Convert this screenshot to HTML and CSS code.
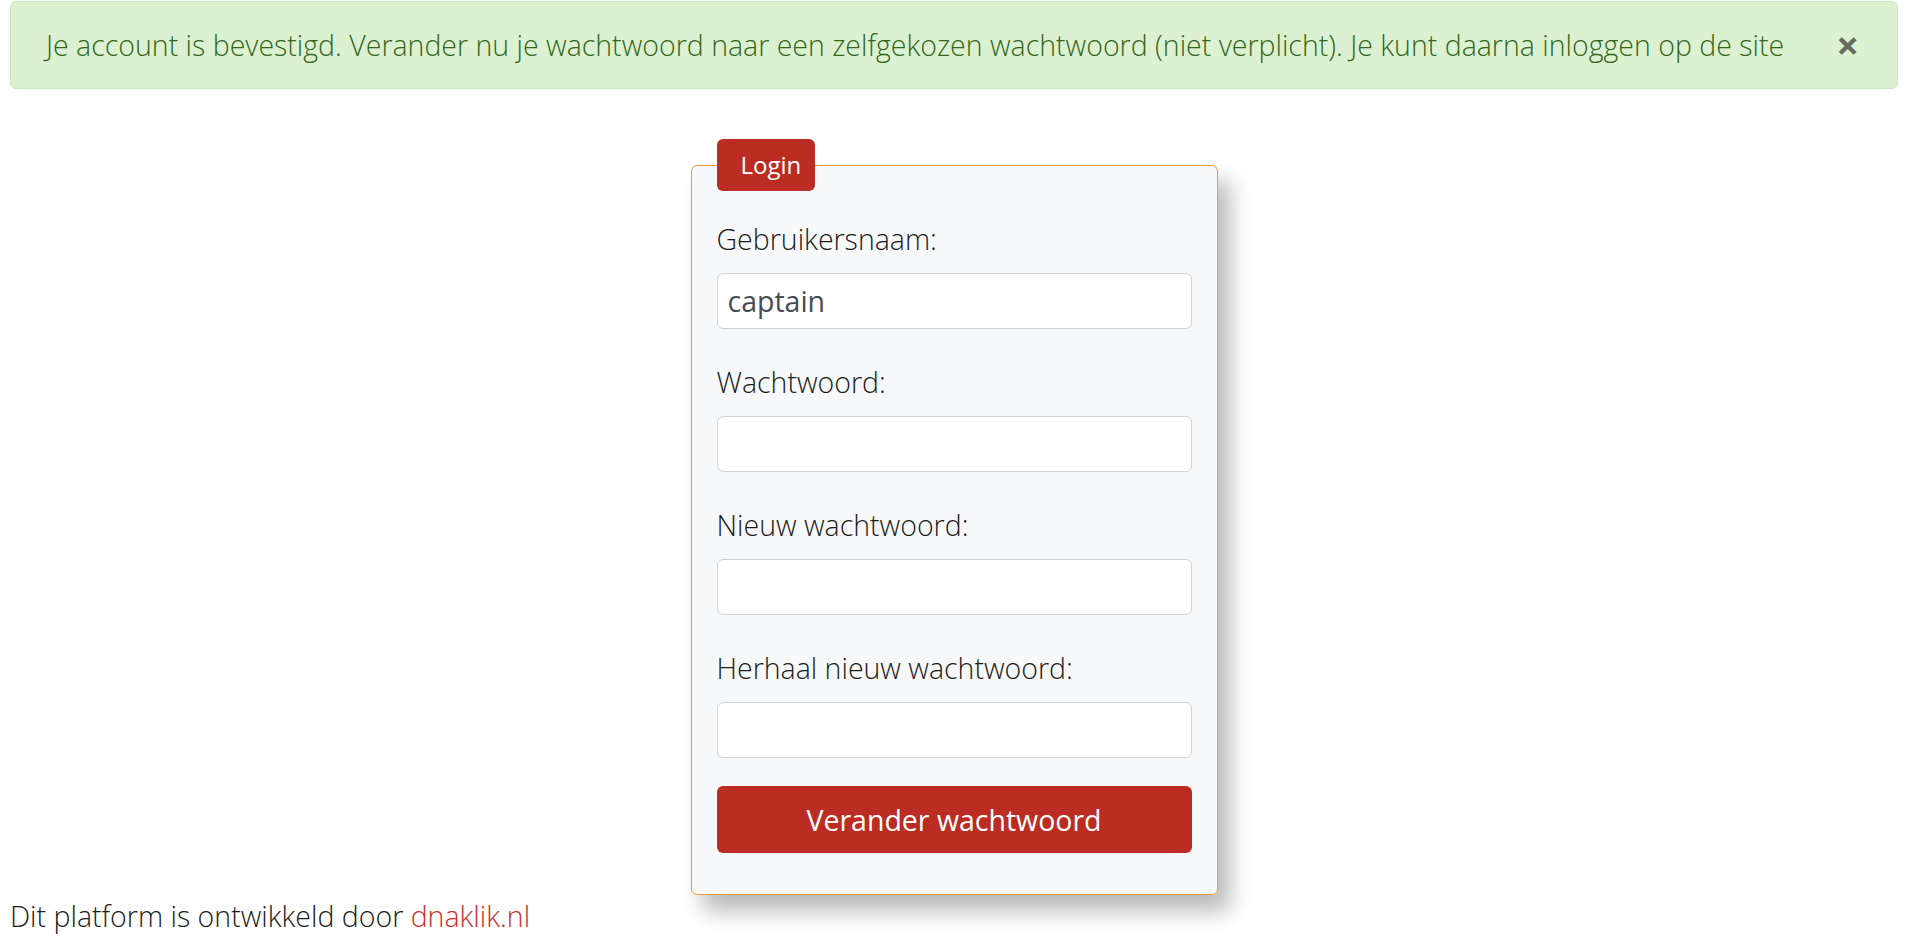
FILE: index.html
```html
<!DOCTYPE html>
<html lang="nl">
<head>
<meta charset="UTF-8">
<title>Login</title>
<link rel="stylesheet" href="styles.css">
</head>
<body>

<div class="page">
	<div class="alert">
		Je account is bevestigd. Verander nu je wachtwoord naar een zelfgekozen wachtwoord (niet verplicht). Je kunt daarna inloggen op de site
		<span class="close">&times;</span>
	</div>

	<form class="login" onsubmit="return false">
		<fieldset>
			<legend>Login</legend>
			<div class="field">
				<label for="username">Gebruikersnaam:</label>
				<input id="username" type="text" value="captain">
			</div>
			<div class="field">
				<label for="password">Wachtwoord:</label>
				<input id="password" type="password">
			</div>
			<div class="field">
				<label for="new1">Nieuw wachtwoord:</label>
				<input id="new1" type="password">
			</div>
			<div class="field">
				<label for="new2">Herhaal nieuw wachtwoord:</label>
				<input id="new2" type="password">
			</div>
			<button type="submit">Verander wachtwoord</button>
		</fieldset>
	</form>

	<p class="footer">Dit platform is ontwikkeld door <a href="#">dnaklik.nl</a></p>
</div>

</body>
</html>
```

FILE: styles.css
```css
* {
	box-sizing: border-box;
	margin: 0;
	padding: 0;
}
html, body {
	background: #fff;
	color: #1c1c1c;
}
body {
	font-family: "Open Sans", "Liberation Sans", sans-serif;
	font-size: 28.5px;
	font-weight: 300;
	line-height: 38px;
}
.page {
	margin: 1px 22px 0 10px;
}

.alert {
	position: relative;
	background: #dcf1d2;
	border: 1px solid #c9e8bb;
	border-radius: 6px;
	color: #33681a;
	padding: 24px 80px 24px 35px;
	white-space: nowrap;
}
.alert .close {
	position: absolute;
	right: 38px;
	top: 24px;
	font-weight: 700;
	font-size: 40px;
	color: #646b62;
	cursor: pointer;
}

.login {
	width: 527px;
	margin: 50px auto 2px;
}
fieldset {
	background: #f7f8fa;
	border: 1px solid #ef9a3a;
	border-radius: 6px;
	padding: 29px 25px 41px;
	box-shadow: 12px 16px 22px rgba(0,0,0,0.28);
}
legend {
	background: #bb2c22;
	color: #fff;
	font-weight: 400;
	font-size: 24px;
	line-height: 52px;
	padding: 0 14px 0 24px;
	border-radius: 6px;
}
.field {
	margin-bottom: 34px;
}
.field:last-of-type {
	margin-bottom: 28px;
}
label {
	display: block;
	margin-bottom: 15px;
}
input {
	display: block;
	width: 100%;
	height: 56px;
	border: 1px solid #cfd3d8;
	border-radius: 6px;
	background: #fff;
	font-family: inherit;
	font-size: 28.5px;
	font-weight: 400;
	color: #464c53;
	padding: 0 10px;
}
button {
	display: block;
	width: 100%;
	height: 67px;
	border: 0;
	border-radius: 6px;
	background: #bb2c22;
	color: #fff;
	font-family: inherit;
	font-size: 28.5px;
	font-weight: 400;
	cursor: pointer;
}

.footer {
	color: #1c1c1c;
}
.footer a {
	color: #c8302a;
	text-decoration: none;
}
```
